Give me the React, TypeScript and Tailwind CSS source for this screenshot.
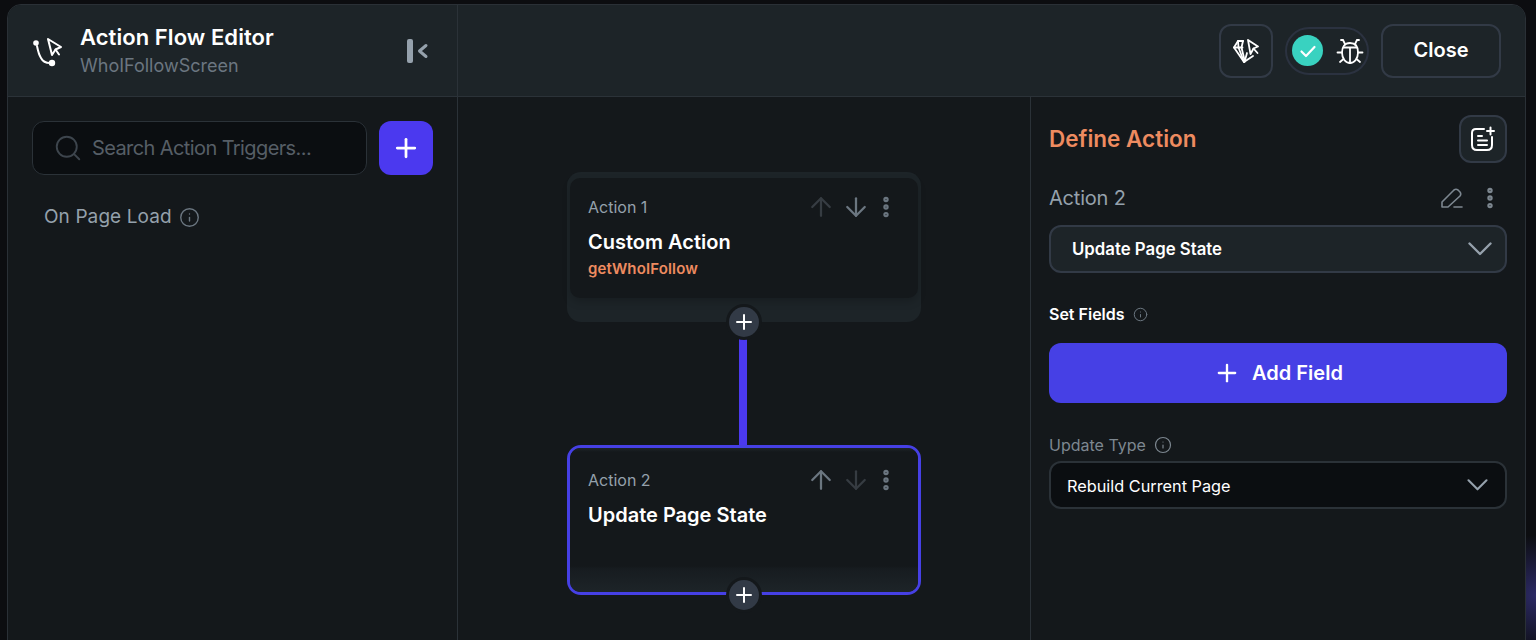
import { ArrowDown, ArrowUp, EllipsisVertical, Info, Plus, Search } from "lucide-react";

const font = "font-['Inter','Liberation_Sans',sans-serif]";

const FlowIcon = () => (
  <svg width="32" height="32" viewBox="0 0 32 32" fill="none" stroke="white" strokeWidth="2" strokeLinecap="round" strokeLinejoin="round">
    <circle cx="4" cy="8" r="2.800" fill="white" stroke="none" />
    <circle cx="20" cy="28" r="3.200" fill="white" stroke="none" />
    <path d="M5 11 C6 16 7 20 9 23 C11 27 14 28 18 28" />
    <path d="M16 4 L29 12 L23.500 14.500 L20 20 Z" />
    <path d="M23.500 14.500 L27 19.500" />
  </svg>
);

const CollapseIcon = () => (
  <svg width="24" height="26" viewBox="0 0 24 26" fill="none">
    <rect x="1" y="1" width="6" height="24" rx="2" fill="#95a1ac" />
    <path d="M20 7.500 L13.500 13 L20 18.500" stroke="#95a1ac" strokeWidth="3" strokeLinecap="round" strokeLinejoin="round" />
  </svg>
);

const GemCursorIcon = () => (
  <svg width="26" height="26" viewBox="0 0 26 26" fill="none" stroke="white" strokeWidth="1.800" strokeLinecap="round" strokeLinejoin="round">
    <path d="M10 3 H5 L1 9.500 L11 24 L20 18" />
    <path d="M5 3 L5.500 9.500 L11 24" />
    <path d="M1 9.500 H9.500" />
    <path d="M10 3 L8.500 9.500 L11.500 22" />
    <path d="M14 15 L11.500 24" />
    <path d="M15 2 L25 8.500 L20.500 10.500 L17.500 16 Z" />
    <path d="M20.500 10.500 L24.500 15" />
  </svg>
);

const BugIcon = () => (
  <svg width="28" height="28" viewBox="0 0 28 28" fill="none" stroke="white" strokeWidth="1.800" strokeLinecap="round" strokeLinejoin="round">
    <path d="M14 6 C19.500 6 22 10 22 15.500 C22 21.500 18.500 26 14 26 C9.500 26 6 21.500 6 15.500 C6 10 8.500 6 14 6 Z" />
    <path d="M7.500 10.500 H20.500 M14 10.500 V26" />
    <path d="M9 7 L7 3 M19 7 L21 3 M7 3 H5 M21 3 H23" />
    <path d="M6 15.500 H1.500 M22 15.500 H26.500 M7.500 22 L4 25 M20.500 22 L24 25" />
  </svg>
);

const NoteAddIcon = () => (
  <svg width="26" height="26" viewBox="0 0 26 26" fill="none" stroke="white" strokeWidth="2" strokeLinecap="round" strokeLinejoin="round">
    <path d="M14 3 H6 C3.500 3 2 4.500 2 7 V19 C2 22.500 3.500 24 7 24 H17 C20 24 22 22.500 22 19 V11" />
    <path d="M8 10 H12 M8 14.500 H17 M8 19 H17" />
    <path d="M20.500 1.500 V8.500 M17 5 H24" />
  </svg>
);

const PencilLine = () => (
  <svg width="22" height="20" viewBox="0 0 22 20" fill="none" stroke="#7d8790" strokeWidth="1.600" strokeLinecap="round" strokeLinejoin="round">
    <path d="M1 19 V14 L13 2 Q15 0.500 17 2 L19 4 Q20.500 6 19 8 L7 19 Z" />
    <path d="M13 19 H21" />
  </svg>
);

const Chevron = (props: { w: number; h: number }) => (
  <svg width={props.w} height={props.h} viewBox="0 0 24 14" fill="none" stroke="#95a1ac" strokeWidth="2.400" strokeLinecap="round" strokeLinejoin="round">
    <path d="M1.500 1.500 L12 12 L22.500 1.500" />
  </svg>
);

const AddDot = (props: { selected?: boolean }) => (
  <div
    className={
      props.selected
        ? "absolute left-1/2 -bottom-[21px] z-10 flex h-9 w-9 -translate-x-1/2 items-center justify-center rounded-full bg-[#14181b]"
        : "absolute left-1/2 -bottom-[18px] z-10 flex h-9 w-9 -translate-x-1/2 items-center justify-center rounded-full bg-[#14181b]"
    }
  >
    <div className="flex h-[30px] w-[30px] items-center justify-center rounded-full bg-[#323a46]">
      <Plus size={24} strokeWidth={2} color="white" />
    </div>
  </div>
);

function ActionCard(props: { label: string; title: string; sub?: string; upOn: boolean; selected?: boolean }) {
  const on = "#6b7680";
  const off = "#363c42";
  return (
    <div
      className={
        props.selected
          ? "relative h-[150px] w-[354px] rounded-[14px] border-[3px] border-[#4640e5] bg-[#14181b]"
          : "relative h-[150px] w-[354px] rounded-[14px] bg-[#1d2428] px-[3px] pt-[6px]"
      }
    >
      <div
        className={
          props.selected
            ? "h-full rounded-[10px] bg-[linear-gradient(#1d2428,#14181b_4px,#14181b_82%,#171c20_84%,#1d2428)] px-[18px] pt-[20px]"
            : "h-[120px] rounded-[10px] bg-[#14181b] px-[18px] pt-[17px] shadow-[0_4px_8px_rgba(0,0,0,0.18)]"
        }
      >
        <div className="flex h-6 items-center">
          <span className="text-[16px] leading-6 text-[#95a1ac]">{props.label}</span>
          <div className="ml-auto flex items-center pr-[1px]">
            <ArrowUp size={30} strokeWidth={1.800} color={props.upOn ? on : off} />
            <ArrowDown size={30} strokeWidth={1.800} color={props.upOn ? off : on} className="ml-[5px]" />
            <EllipsisVertical size={26} strokeWidth={3} color={on} className="ml-[2px]" />
          </div>
        </div>
        <div className="mt-[11px] text-[20px] leading-6 font-semibold text-white">{props.title}</div>
        {props.sub && <div className="mt-[5px] text-[15px] leading-5 font-semibold tracking-[0.01em] text-[#ee8b60]">{props.sub}</div>}
      </div>
      <AddDot selected={props.selected} />
    </div>
  );
}

export default function App() {
  return (
    <div className={`${font} h-[640px] w-[1536px] overflow-hidden bg-[#0c0d10] bg-[radial-gradient(circle_at_100%_93%,#2c2a66,#0c0d10_60px)] pt-[4px] pl-[7px]`}>
      <div className="flex h-[640px] w-[1519px] flex-col overflow-hidden rounded-t-[14px] border border-[#2a3036] bg-[#14181b]">
        <div className="flex h-[92px] shrink-0 border-b border-[#2b3238] bg-[#1d2428]">
          <div className="flex w-[450px] shrink-0 items-center border-r border-[#2b3238] pr-[27px] pl-[24px]">
            <FlowIcon />
            <div className="ml-[16px]">
              <div className="text-[22px] leading-7 font-semibold tracking-[0.003em] text-white">Action Flow Editor</div>
              <div className="mt-[3px] text-[18px] leading-6 text-[#6b7680]">WhoIFollowScreen</div>
            </div>
            <div className="ml-auto">
              <CollapseIcon />
            </div>
          </div>
          <div className="flex flex-1 items-center justify-end gap-3 pr-[24px]">
            <div className="flex h-[54px] w-[54px] items-center justify-center rounded-[12px] border-2 border-[#323a46]">
              <GemCursorIcon />
            </div>
            <div className="flex h-[48px] w-[84px] items-center gap-[13px] rounded-full border-2 border-[#2b3240] pl-[5px]">
              <div className="flex h-[31px] w-[31px] items-center justify-center rounded-full bg-[#39d2c0]">
                <svg width="18" height="18" viewBox="0 0 18 18" fill="none" stroke="white" strokeWidth="2.200" strokeLinecap="round" strokeLinejoin="round">
                  <path d="M2.500 9.500 L7 14 L15.500 5" />
                </svg>
              </div>
              <BugIcon />
            </div>
            <div className="flex h-[54px] w-[120px] items-center justify-center rounded-[12px] border-2 border-[#323a46] pb-[2px] text-[20px] font-semibold text-white">
              Close
            </div>
          </div>
        </div>

        <div className="flex min-h-0 flex-1">
          <div className="w-[450px] shrink-0 border-r border-[#2b3238] pt-[24px] pr-[24px] pl-[24px]">
            <div className="flex items-center gap-3">
              <div className="flex h-[54px] flex-1 items-center gap-[9px] rounded-[12px] border border-[#2b3238] bg-[#0b0e11] pl-[20px]">
                <Search size={30} strokeWidth={1.500} color="#3d454d" />
                <span className="text-[20px] tracking-[-0.03em] text-[#565e66]">Search Action Triggers...</span>
              </div>
              <div className="flex h-[54px] w-[54px] items-center justify-center rounded-[12px] bg-[#4b39ef]">
                <Plus size={30} strokeWidth={2.200} color="white" />
              </div>
            </div>
            <div className="mt-[28px] flex items-center gap-[7px] pl-[12px]">
              <span className="text-[19px] leading-7 tracking-[0.005em] text-[#95a1ac]">On Page Load</span>
              <Info size={21} strokeWidth={1.600} color="#6b7680" />
            </div>
          </div>

          <div className="flex flex-1 flex-col items-center pt-[75px]">
            <ActionCard label="Action 1" title="Custom Action" sub="getWhoIFollow" upOn={false} />
            <div className="mr-[2px] h-[123px] w-2 shrink-0 bg-[#4b39ef]" />
            <ActionCard label="Action 2" title="Update Page State" upOn selected />
          </div>

          <div className="w-[495px] shrink-0 border-l border-[#2b3238] pt-[18px] pr-[18px] pl-[18px]">
            <div className="flex items-center justify-between">
              <span className="text-[22.500px] font-semibold text-[#ee8b60]">Define Action</span>
              <div className="flex h-12 w-12 items-center justify-center rounded-[12px] border-2 border-[#323a46] bg-[#1d2428]">
                <NoteAddIcon />
              </div>
            </div>
            <div className="mt-[21px] flex h-7 items-center">
              <span className="text-[20px] leading-7 tracking-[-0.01em] text-[#95a1ac]">Action 2</span>
              <div className="ml-auto">
                <PencilLine />
              </div>
              <EllipsisVertical size={26} strokeWidth={3} color="#7d8790" className="ml-[14px] mr-[4px]" />
            </div>
            <div className="mt-[13px] flex h-12 items-center justify-between rounded-[12px] border-2 border-[#323a46] bg-[#1d2428] pr-[13px] pl-[21px]">
              <span className="mt-[2px] text-[16.800px] font-semibold text-white">Update Page State</span>
              <Chevron w={24} h={14} />
            </div>
            <div className="mt-[29px] flex items-center gap-2">
              <span className="text-[16px] leading-6 font-semibold text-white">Set Fields</span>
              <Info size={15} strokeWidth={1.600} color="#6b7680" />
            </div>
            <div className="mt-[17px] flex h-[60px] items-center justify-center gap-[11px] rounded-[12px] bg-[#4640e5] text-[20px] font-semibold text-white">
              <Plus size={28} strokeWidth={2} color="white" />
              Add Field
            </div>
            <div className="mt-[30px] flex items-center gap-2">
              <span className="text-[16px] leading-6 text-[#7d8790]">Update Type</span>
              <Info size={18} strokeWidth={1.600} color="#7d8790" />
            </div>
            <div className="mt-[4px] flex h-12 items-center justify-between rounded-[12px] border-2 border-[#2b3238] bg-[#0b0e11] pr-[17px] pl-[16px]">
              <span className="mt-[2px] text-[16.300px] text-white">Rebuild Current Page</span>
              <Chevron w={21} h={12} />
            </div>
          </div>
        </div>
      </div>
    </div>
  );
}
